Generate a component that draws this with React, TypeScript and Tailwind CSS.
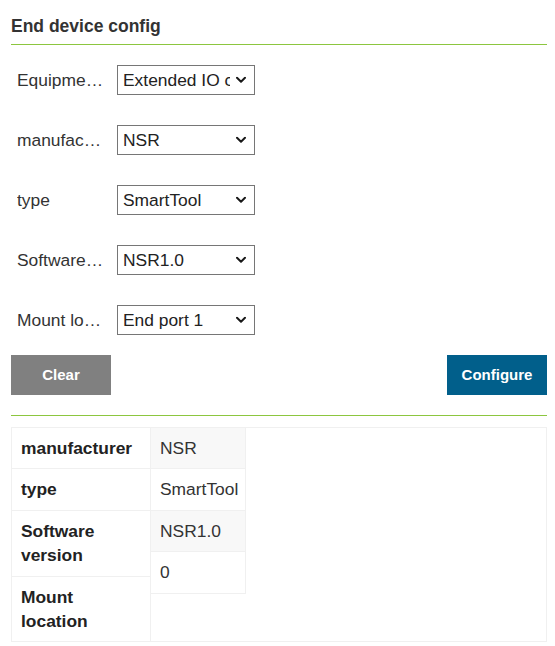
import React from "react";

const rows = [
  { label: "Equipment type", value: "Extended IO card", options: ["Extended IO card"] },
  { label: "manufacturer", value: "NSR", options: ["NSR"] },
  { label: "type", value: "SmartTool", options: ["SmartTool"] },
  { label: "Software version", value: "NSR1.0", options: ["NSR1.0"] },
  { label: "Mount location", value: "End port 1", options: ["End port 1"] },
];

const keys = ["manufacturer", "type", "Software version", "Mount location"];
const values = ["NSR", "SmartTool", "NSR1.0", "0"];

function Chevron() {
  return (
    <svg
      className="pointer-events-none absolute right-[9px] top-1/2 -translate-y-1/2"
      width="10"
      height="7"
      viewBox="0 0 10 7"
      fill="none"
    >
      <path d="M1 1.2 L5 5.2 L9 1.2" stroke="#1a1a1a" strokeWidth="2" strokeLinecap="round" strokeLinejoin="round" />
    </svg>
  );
}

export default function App() {
  return (
    <div
      className="min-h-[646px] bg-white pl-[11px] pr-[8px] text-[17.4px] text-[#333]"
      style={{ fontFamily: '"Liberation Sans", Arial, sans-serif' }}
    >
      <div className="border-b border-[#8cc63f] pt-[14px] pb-[6px] text-[17.5px] font-bold leading-6 text-[#333]">
        End device config
      </div>

      <div className="flex flex-col gap-[30px] pt-5">
        {rows.map((r) => (
          <div key={r.label} className="flex items-center">
            <div className="ml-[6px] mr-[12px] w-[88px] truncate">{r.label}</div>
            <div className="relative h-[30px] w-[138px]">
              <select
                defaultValue={r.value}
                className="h-full w-full appearance-none border border-[#767676] bg-white pl-[5px] pr-[24px] text-[17.4px] text-[#222] outline-none"
              >
                {r.options.map((o) => (
                  <option key={o}>{o}</option>
                ))}
              </select>
              <Chevron />
            </div>
          </div>
        ))}
      </div>

      <div className="mt-5 flex justify-between">
        <button className="h-10 w-[100px] bg-[#808080] text-[15px] font-bold text-white">Clear</button>
        <button className="h-10 w-[100px] bg-[#015f8b] text-[15px] font-bold text-white">Configure</button>
      </div>

      <div className="mt-5 border-t border-[#8cc63f]" />

      <div className="mt-[11px] flex border border-[#f0f0f0] leading-[24.4px]">
        <div className="flex w-[139px] flex-col border-r border-[#f0f0f0] font-bold text-[#222]">
          {keys.map((k, i) => (
            <div
              key={k}
              className={`py-2 pl-[9px] pr-2 ${i < keys.length - 1 ? "border-b border-[#f0f0f0]" : ""}`}
            >
              {k}
            </div>
          ))}
        </div>
        <div className="flex flex-col self-start">
          {values.map((v, i) => (
            <div
              key={i}
              className={`border-r border-b border-[#f0f0f0] py-2 pl-[9px] pr-[7px] text-[#333] ${
                i % 2 === 0 ? "bg-[#f8f8f8]" : "bg-white"
              }`}
            >
              {v}
            </div>
          ))}
        </div>
      </div>
    </div>
  );
}
